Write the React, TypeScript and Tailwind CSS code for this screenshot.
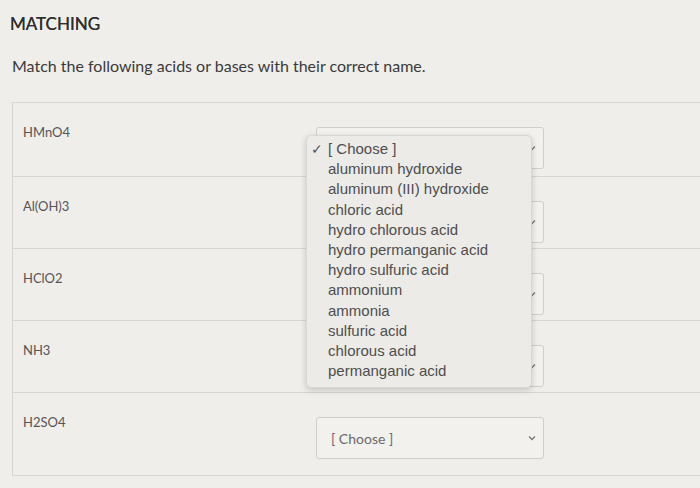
import React from "react";

const rows = [
  { label: "HMnO4", h: 74 },
  { label: "Al(OH)3", h: 72 },
  { label: "HClO2", h: 72 },
  { label: "NH3", h: 72 },
  { label: "H2SO4", h: 82 },
];

const options = [
  "[ Choose ]",
  "aluminum hydroxide",
  "aluminum (III) hydroxide",
  "chloric acid",
  "hydro chlorous acid",
  "hydro permanganic acid",
  "hydro sulfuric acid",
  "ammonium",
  "ammonia",
  "sulfuric acid",
  "chlorous acid",
  "permanganic acid",
];

function Chevron() {
  return (
    <svg width="10" height="10" viewBox="0 0 10 10" className="text-[#777]">
      <path d="M2 3.5 L5 6.5 L8 3.5" fill="none" stroke="currentColor" strokeWidth="1.3" />
    </svg>
  );
}

export default function App() {
  return (
    <div
      className="relative w-[700px] h-[488px] overflow-hidden bg-[#efeeeb]"
      style={{ fontFamily: "Lato, 'Liberation Sans', sans-serif" }}
    >
      <div className="pl-[10px] pt-[11px] text-[17px] leading-[26px] text-[#2e2e2e] [text-shadow:0_0_0.4px_#2e2e2e]">
        MATCHING
      </div>
      <div className="pl-[12px] pt-[17px] text-[16px] leading-[24px] text-[#3a3a3a]">
        Match the following acids or bases with their correct name.
      </div>
      <div className="mt-[24px] ml-[12px] border-t border-l border-b border-[#d6d5d2]">
        {rows.map((r, i) => {
          const last = i === rows.length - 1;
          return (
            <div
              key={r.label}
              className={`flex items-start ${!last ? "border-b border-[#d6d5d2]" : ""}`}
              style={{ height: r.h }}
            >
              <div className="w-[303px] pl-[10px] pt-[20px] text-[13px] leading-[18px] text-[#555]">
                {r.label}
              </div>
              <div className="mt-[24px] flex h-[42px] w-[228px] items-center justify-between rounded-[3px] border border-[#cfcecb] bg-[#f2f1ee] pl-[14px] pr-[6px]">
                <span className="text-[14px] text-[#6a6a6a]">{last ? "[ Choose ]" : ""}</span>
                <Chevron />
              </div>
            </div>
          );
        })}
      </div>

      <div
        className="absolute left-[306px] top-[135px] w-[226px] h-[253px] rounded-[5px] border border-[#d8d7d4] bg-[#ecebe8] shadow-[0_2px_6px_rgba(0,0,0,0.18)] pt-[3px]"
        style={{ fontFamily: "'Liberation Sans', Arial, sans-serif" }}
      >
        {options.map((o, i) => (
          <div key={o} className="relative pl-[21px] text-[15px] leading-[20.2px] text-[#4e4e4e]">
            {i === 0 && <span className="absolute left-[4px] top-0 text-[14px] text-[#555]">✓</span>}
            {o}
          </div>
        ))}
      </div>
    </div>
  );
}
